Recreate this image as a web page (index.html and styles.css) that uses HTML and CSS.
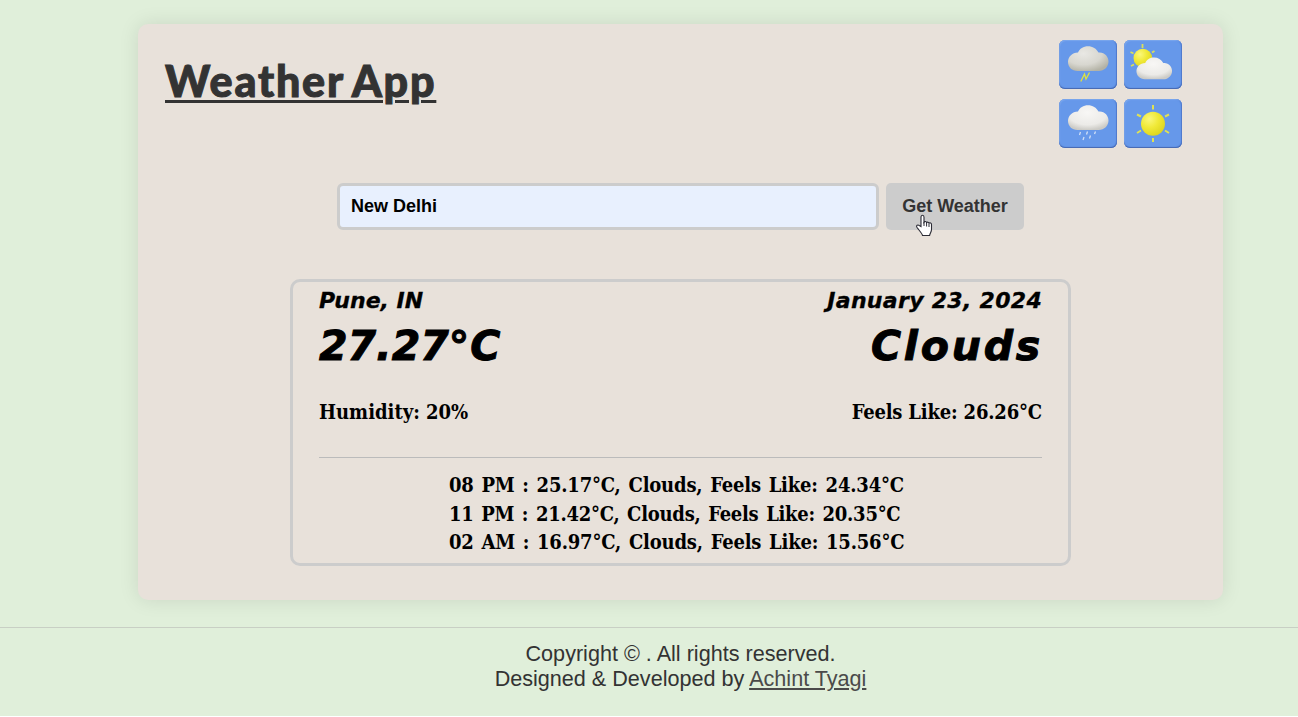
FILE: index.html
```html
<!DOCTYPE html>
<html lang="en">
<head>
<meta charset="utf-8">
<title>Weather App</title>
<link rel="stylesheet" href="styles.css">
</head>
<body>
<main class="card">
  <header class="header">
    <h1 class="title">Weather App</h1>
    <div class="icons">
      <svg class="tile" viewBox="0 0 58 49">
        <defs>
          <radialGradient id="cloud" cx=".48" cy=".3" r=".7"><stop offset="0" stop-color="#f8f7f5"/><stop offset=".7" stop-color="#ecebe8"/><stop offset="1" stop-color="#cccbc6"/></radialGradient>
          <radialGradient id="storm" cx=".38" cy=".3" r=".75"><stop offset="0" stop-color="#e9e8e4"/><stop offset=".6" stop-color="#d8d7d0"/><stop offset="1" stop-color="#b3b2a5"/></radialGradient>
          <radialGradient id="sun" cx=".35" cy=".3" r=".75"><stop offset="0" stop-color="#faf77c"/><stop offset=".5" stop-color="#f0e937"/><stop offset="1" stop-color="#dcd41e"/></radialGradient>
          <path id="puff" d="M10 31C4.500 31 .5 27 .5 22S4.500 12.500 10.500 12.500C12 8.500 16 6.200 20.500 6.200S29 8.500 31 12.500C37 11.800 41 16.500 41 21.500S37 31 31 31Z"/>
        </defs>
        <use href="#puff" x="8.500" fill="url(#storm)"/>
        <path d="M21.800 41.500l3.700-7.500 1.500 5 3.500-6.500" fill="none" stroke="#dfe33c" stroke-width="1.300"/>
      </svg>
      <svg class="tile" viewBox="0 0 58 49">
        <path d="M18.500 4v4M6.500 12l3 1.500M30.500 11l-2.500 1.500M7 26l3-1.500" stroke="#d8de5c" stroke-width="1.800"/>
        <circle cx="18.800" cy="18" r="9.300" fill="url(#sun)"/>
        <use href="#puff" transform="translate(12 12) scale(.88)" fill="url(#cloud)"/>
      </svg>
      <svg class="tile" viewBox="0 0 58 49">
        <use href="#puff" x="8.500" fill="url(#cloud)"/>
        <path d="M21.500 33l-1 3M28.500 32.500l-1 3M36.500 32.500l-1 2.500M25 38l-1 3M31.500 36.500l-1 3" stroke="#d2e0f5" stroke-width="1.300"/>
      </svg>
      <svg class="tile" viewBox="0 0 58 49">
        <path d="M29 6v4.500M29 39v4M13 15.500l4 2M45 15.500l-4 2M13 34l4-2.500M45 34l-4-2.500" stroke="#dfe255" stroke-width="2"/>
        <circle cx="29" cy="24.800" r="12" fill="url(#sun)"/>
      </svg>
    </div>
  </header>
  <form class="search">
    <input class="city" type="text" value="New Delhi" aria-label="City">
    <button class="submit" type="button">Get Weather
      <svg class="pointer" viewBox="0 0 18 23"><path d="M6 12.500V3.200c0-2.600 3-2.600 3 0v5c.6-1 2.300-.8 2.600.4.700-.8 2.200-.5 2.400.6 1-.7 2.500-.2 2.500 1.300v5c0 2.500-1.500 3.500-1.900 6H7.500c-.3-2.200-3.200-4.800-5.600-8.200-1.200-1.800 1-3 2.300-1.800Z" fill="#fff" stroke="#2b2b35" stroke-width="1.100"/><path d="M9 8v4M11.600 9v3.500M14 10v3" stroke="#2b2b35" stroke-width="1"/></svg>
    </button>
  </form>
  <section class="result">
    <div class="row place"><span class="town">Pune, IN</span><span class="date">January 23, 2024</span></div>
    <div class="row main"><span class="temp">27.27<span class="degree">°</span>C</span><span class="sky">Clouds</span></div>
    <div class="row details"><span class="humidity">Humidity: 20%</span><span class="feels">Feels Like: 26.26°C</span></div>
    <div class="forecast">
      <p class="hour">08 PM : 25.17°C, Clouds, Feels Like: 24.34°C</p>
      <p class="hour early">11 PM : 21.42°C, Clouds, Feels Like: 20.35°C</p>
      <p class="hour">02 AM : 16.97°C, Clouds, Feels Like: 15.56°C</p>
    </div>
  </section>
</main>
<footer class="footer">
  <p class="line">Copyright © . All rights reserved.</p>
  <p class="line">Designed &amp; Developed by <a class="author" href="#">Achint Tyagi</a></p>
</footer>
</body>
</html>
```
FILE: styles.css
```css
* { box-sizing: border-box; }
html { background: #fff; }
body {
  margin: 0;
  height: 716px;
  overflow: hidden;
  background: #e0efda;
  display: flex;
  flex-direction: column;
  font-family: "Liberation Sans", Arial, sans-serif;
}
.card {
  width: 1085px;
  height: 576px;
  flex: none;
  margin: 24px 0 0 138px;
  padding: 16px 41px 0 27px;
  border-radius: 10px;
  background: #e8e1da;
  box-shadow: 0 0 20px rgba(0, 0, 0, .1);
}
.header { display: flex; justify-content: space-between; height: 143px; }
.title {
  margin: 15px 0 0;
  font: 900 43px/52px Lato, "Gill Sans", sans-serif;
  letter-spacing: 1.8px;
  word-spacing: -3px;
  color: #333;
  -webkit-text-stroke: 1px #333;
  text-decoration: underline;
  text-decoration-thickness: 3px;
  text-underline-offset: 3px;
  white-space: nowrap;
}
.icons { display: grid; grid-template-columns: 58px 58px; grid-template-rows: 49px 49px; gap: 10px 7px; }
.tile {
  width: 58px;
  height: 49px;
  border-radius: 6px;
  background: #6698ea;
  box-shadow: inset 0 -1px 1px #4567b0, inset 1px 1px 1px #7ba7ed, inset -1px 0 1px #507bd0;
}
.search { display: flex; gap: 7px; height: 47px; margin: 0 0 0 172px; }
.city {
  width: 542px;
  padding: 0 11px;
  border: 3px solid #ccc;
  border-radius: 6px;
  background: #e8f0fe;
  font: bold 18px "Liberation Sans", Arial, sans-serif;
  color: #000;
}
.submit {
  position: relative;
  width: 138px;
  padding: 0;
  border: 0;
  border-radius: 5px;
  background: #ccc;
  color: #333;
  font: bold 18px "Liberation Sans", Arial, sans-serif;
  white-space: nowrap;
}
.pointer { position: absolute; left: 29px; top: 31px; width: 18px; height: 23px; }
.result {
  width: 781px;
  height: 287px;
  margin: 49px 0 0 125px;
  padding: 3px 26px 0;
  border: 3px solid #ccc;
  border-radius: 10px;
  color: #000;
}
.row { display: flex; justify-content: space-between; white-space: nowrap; }
.place { height: 32px; font: italic bold 22px/32px "DejaVu Sans", sans-serif; -webkit-text-stroke: .3px #000; }
.date { letter-spacing: .3px; }
.main { height: 60px; font: italic bold 41px/58px "DejaVu Sans", sans-serif; -webkit-text-stroke: 1px #000; }
.sky { letter-spacing: 2.8px; margin-right: -1px; }
.degree { letter-spacing: 1px; }
.details {
  height: 81px;
  padding-top: 19px;
  border-bottom: 1px solid #bbb;
  font: bold 20px/32px "DejaVu Serif Condensed", "DejaVu Serif", serif;
  font-stretch: condensed;
}
.feels { letter-spacing: -.18px; }
.forecast {
  padding: 13px 0 0 130px;
  font: bold 20px/28.7px "DejaVu Serif Condensed", "DejaVu Serif", serif;
  font-stretch: condensed;
  letter-spacing: -.18px;
  word-spacing: 1.7px;
}
.hour { margin: 0; white-space: nowrap; }
.early { letter-spacing: -.26px; }
.footer {
  margin-top: 27px;
  padding: 13px 0 0 63px;
  border-top: 1px solid #c8cfc4;
  text-align: center;
  font-size: 21.6px;
  line-height: 25px;
  color: #333;
}
.line { margin: 0; }
.author { color: #4a4a4a; }
```
